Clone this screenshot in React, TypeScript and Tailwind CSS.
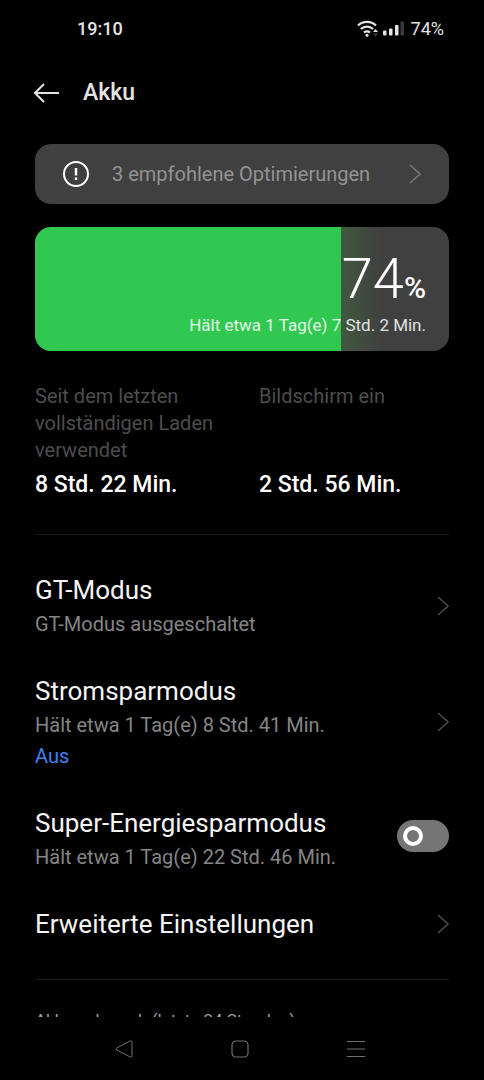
import React, { useState } from 'react';

interface ChevronProps {
  className?: string;
}

function Chevron({ className = 'text-[#4a4a4a]' }: ChevronProps) {
  return (
    <svg viewBox="0 0 12 20" className={`h-5 w-3 shrink-0 ${className}`} fill="none" stroke="currentColor" strokeWidth="1.6">
      <path d="M1 1l10 9-10 9" />
    </svg>
  );
}

function StatusBar() {
  return (
    <div className="flex h-[58px] shrink-0 items-center justify-between pl-[77px] pr-10 text-lg text-[#e4e4e4]">
      <span className="font-medium">19:10</span>
      <div className="flex items-center">
        <svg viewBox="0 0 22 18" className="h-[18px] w-[22px]" fill="none" stroke="currentColor" strokeWidth="2.3">
          <path d="M1 5.500a13 13 0 0 1 18 0" />
          <path d="M4 9a9 9 0 0 1 12 0" />
          <path d="M7 12.500a5 5 0 0 1 6 0" />
          <circle cx="10" cy="15.200" r="1.500" fill="currentColor" stroke="none" />
          <path d="M16 12l2.500-3 2.500 3z" fill="currentColor" stroke="none" />
          <path d="M16 13.500l2.500 3 2.500-3z" fill="#444" stroke="none" />
        </svg>
        <svg viewBox="0 0 21 16" className="ml-1 h-4 w-[21px]" fill="currentColor">
          <rect x="0" y="9.500" width="3.500" height="5" rx="1" />
          <rect x="6" y="7.500" width="3.500" height="7" rx="1" />
          <rect x="12" y="4" width="3.500" height="10.500" rx="1" />
          <rect x="17.500" y="0.500" width="3.500" height="14" rx="1" fill="#3a3a3a" />
        </svg>
        <span className="ml-[7px]">74%</span>
      </div>
    </div>
  );
}

interface StatProps {
  label: string;
  value: string;
}

function Stat({ label, value }: StatProps) {
  return (
    <div className="flex flex-col justify-between">
      <dt className="text-xl leading-[27px] text-[#4d4d4d]">{label}</dt>
      <dd className="mt-[7px] text-[23px] leading-7 font-medium text-white">{value}</dd>
    </div>
  );
}

interface RowProps {
  title: string;
  description?: string;
  status?: string;
}

function SettingRow({ title, description, status }: RowProps) {
  return (
    <button type="button" className="flex w-full items-center justify-between text-left">
      <span className="flex flex-col">
        <span className="text-[26px] leading-[38px] text-[#f5f5f5]">{title}</span>
        {description && <span className="text-xl leading-[31px] text-[#858585]">{description}</span>}
        {status && <span className="text-xl leading-[31px] text-[#4280f0]">{status}</span>}
      </span>
      <Chevron />
    </button>
  );
}

export default function App() {
  const [superSaver, setSuperSaver] = useState(false);
  const level = 74;

  return (
    <div className="flex h-screen flex-col bg-black font-['Roboto',sans-serif] text-white">
      <StatusBar />

      <header className="flex h-[70px] shrink-0 items-center px-[34px]">
        <button type="button" aria-label="Zurück">
          <svg viewBox="0 0 26 20" className="h-5 w-[26px] text-[#e4e4e4]" fill="none" stroke="currentColor" strokeWidth="2">
            <path d="M10 1L1 10l9 9M1 10h24" />
          </svg>
        </button>
        <h1 className="ml-[23px] text-[23px] leading-9 font-medium text-[#e4e4e4]">Akku</h1>
      </header>

      <main className="min-h-0 flex-1 overflow-hidden px-[35px] pt-4">
        <button type="button" className="flex h-[60px] w-full items-center rounded-2xl bg-[#404040] px-7 text-left">
          <svg viewBox="0 0 28 28" className="size-7 shrink-0" fill="none" stroke="currentColor" strokeWidth="2">
            <circle cx="13" cy="14" r="12" />
            <path d="M13 8v7.500M13 17.500v2.500" strokeWidth="2.400" />
          </svg>
          <span className="ml-[21px] flex-1 text-xl text-[#939393]">3 empfohlene Optimierungen</span>
          <Chevron className="text-[#757575]" />
        </button>

        <section className="relative mt-[23px] h-[124px] overflow-hidden rounded-2xl bg-[#404040]">
          <div className="absolute inset-0 flex">
            <div className="h-full bg-[#30c850]" style={{ width: `${level}%` }} />
            <div className="h-full w-10 bg-linear-to-r from-[#40593f] to-[#404040]" />
          </div>
          <div className="relative flex h-full flex-col items-end justify-end pr-[23px] pb-3">
            <p className="flex items-baseline">
              <span className="text-[56px] leading-[46px] font-light">{level}</span>
              <span className="text-[30px] leading-[46px] font-medium">%</span>
            </p>
            <p className="text-[17px] leading-7 text-white/85">Hält etwa 1 Tag(e) 7 Std. 2 Min.</p>
          </div>
        </section>

        <dl className="mt-8 grid grid-cols-2 gap-[34px]">
          <Stat label="Seit dem letzten vollständigen Laden verwendet" value="8 Std. 22 Min." />
          <Stat label="Bildschirm ein" value="2 Std. 56 Min." />
        </dl>

        <hr className="mt-[35px] border-[#1c1c1c]" />

        <div className="mt-9 flex flex-col gap-8">
          <SettingRow title="GT-Modus" description="GT-Modus ausgeschaltet" />
          <SettingRow title="Stromsparmodus" description="Hält etwa 1 Tag(e) 8 Std. 41 Min." status="Aus" />
          <div className="flex items-start justify-between">
            <label htmlFor="super-saver" className="flex flex-col">
              <span className="text-[26px] leading-[38px] text-[#f5f5f5]">Super-Energiesparmodus</span>
              <span className="text-xl leading-[31px] text-[#858585]">Hält etwa 1 Tag(e) 22 Std. 46 Min.</span>
            </label>
            <input
              id="super-saver"
              type="checkbox"
              role="switch"
              checked={superSaver}
              onChange={(e) => setSuperSaver(e.target.checked)}
              className="mt-4 flex h-8 w-[52px] shrink-0 appearance-none items-center rounded-full bg-[#757575] px-1.5 before:size-5 before:rounded-full before:border-4 before:border-white checked:justify-end checked:bg-[#30c850]"
            />
          </div>
          <SettingRow title="Erweiterte Einstellungen" />
        </div>

        <hr className="mt-9 border-[#1c1c1c]" />

        <h2 className="mt-[26px] text-[17px] leading-7 text-[#a0a0a0]">Akkuverbrauch (letzte 24 Stunden)</h2>
      </main>

      <nav className="flex h-[63px] shrink-0 items-center justify-center gap-[98px] pr-1 text-[#707070]">
        <button type="button" aria-label="Zurück">
          <svg viewBox="0 0 18 18" className="size-[18px]" fill="none" stroke="currentColor" strokeLinejoin="round">
            <path d="M1.500 8.200L15.500 0.800Q17 0.500 17 2v14q0 1.500-1.500 1.200L1.500 9.800Q0.200 9 1.500 8.200z" />
          </svg>
        </button>
        <button type="button" aria-label="Startseite">
          <svg viewBox="0 0 18 18" className="size-[18px]" fill="none" stroke="currentColor" strokeWidth="1.200">
            <rect x="1" y="1" width="16" height="16" rx="4" />
          </svg>
        </button>
        <button type="button" aria-label="Letzte Apps">
          <svg viewBox="0 0 18 18" className="size-[18px]" fill="none" stroke="currentColor" strokeWidth="1.200">
            <path d="M0 1.500h18M0 9h18M0 16.500h18" />
          </svg>
        </button>
      </nav>
    </div>
  );
}
